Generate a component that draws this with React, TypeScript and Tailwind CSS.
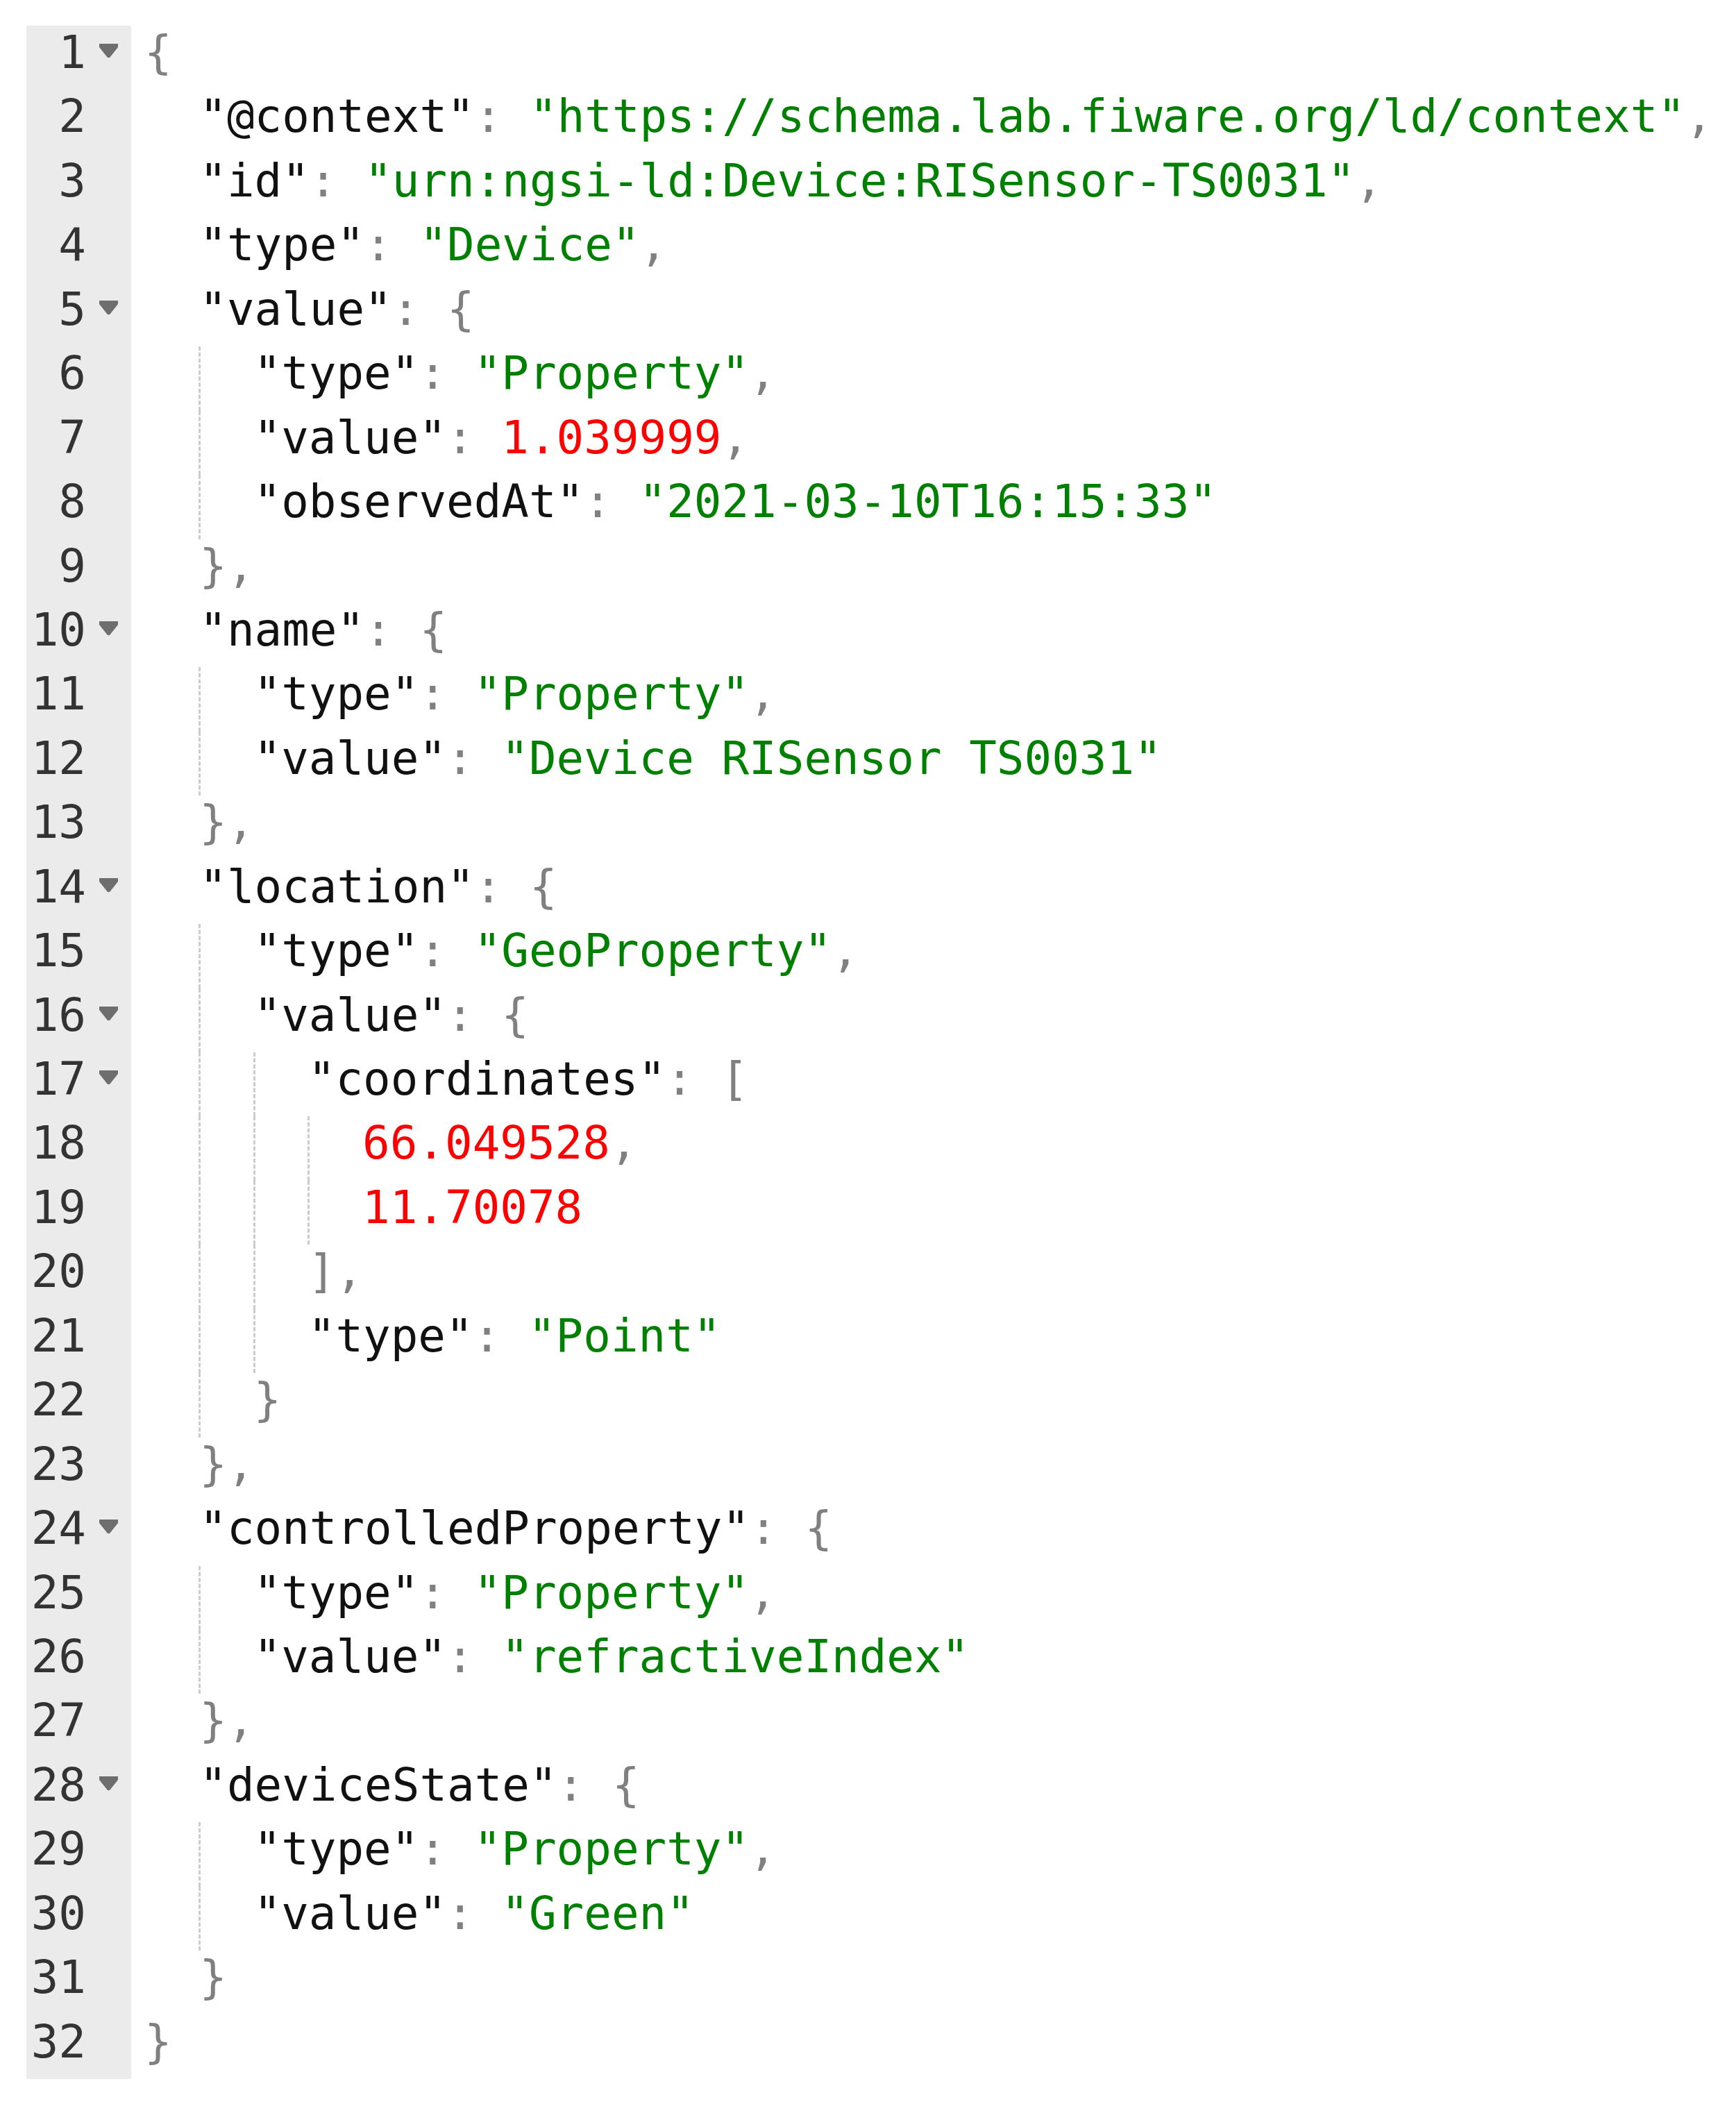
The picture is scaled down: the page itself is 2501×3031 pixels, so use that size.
import React from "react";

type Tok = [string, "k" | "s" | "n" | "p"];

interface Line {
  indent: number;
  fold?: boolean;
  toks: Tok[];
}

// json tokens, one entry per editor row
const lines: Line[] = [
  { indent: 0, fold: true, toks: [["{", "p"]] },
  { indent: 2, toks: [['"@context"', "k"], [": ", "p"], ['"https://schema.lab.fiware.org/ld/context"', "s"], [",", "p"]] },
  { indent: 2, toks: [['"id"', "k"], [": ", "p"], ['"urn:ngsi-ld:Device:RISensor-TS0031"', "s"], [",", "p"]] },
  { indent: 2, toks: [['"type"', "k"], [": ", "p"], ['"Device"', "s"], [",", "p"]] },
  { indent: 2, fold: true, toks: [['"value"', "k"], [": {", "p"]] },
  { indent: 4, toks: [['"type"', "k"], [": ", "p"], ['"Property"', "s"], [",", "p"]] },
  { indent: 4, toks: [['"value"', "k"], [": ", "p"], ["1.039999", "n"], [",", "p"]] },
  { indent: 4, toks: [['"observedAt"', "k"], [": ", "p"], ['"2021-03-10T16:15:33"', "s"]] },
  { indent: 2, toks: [["},", "p"]] },
  { indent: 2, fold: true, toks: [['"name"', "k"], [": {", "p"]] },
  { indent: 4, toks: [['"type"', "k"], [": ", "p"], ['"Property"', "s"], [",", "p"]] },
  { indent: 4, toks: [['"value"', "k"], [": ", "p"], ['"Device RISensor TS0031"', "s"]] },
  { indent: 2, toks: [["},", "p"]] },
  { indent: 2, fold: true, toks: [['"location"', "k"], [": {", "p"]] },
  { indent: 4, toks: [['"type"', "k"], [": ", "p"], ['"GeoProperty"', "s"], [",", "p"]] },
  { indent: 4, fold: true, toks: [['"value"', "k"], [": {", "p"]] },
  { indent: 6, fold: true, toks: [['"coordinates"', "k"], [": [", "p"]] },
  { indent: 8, toks: [["66.049528", "n"], [",", "p"]] },
  { indent: 8, toks: [["11.70078", "n"]] },
  { indent: 6, toks: [["],", "p"]] },
  { indent: 6, toks: [['"type"', "k"], [": ", "p"], ['"Point"', "s"]] },
  { indent: 4, toks: [["}", "p"]] },
  { indent: 2, toks: [["},", "p"]] },
  { indent: 2, fold: true, toks: [['"controlledProperty"', "k"], [": {", "p"]] },
  { indent: 4, toks: [['"type"', "k"], [": ", "p"], ['"Property"', "s"], [",", "p"]] },
  { indent: 4, toks: [['"value"', "k"], [": ", "p"], ['"refractiveIndex"', "s"]] },
  { indent: 2, toks: [["},", "p"]] },
  { indent: 2, fold: true, toks: [['"deviceState"', "k"], [": {", "p"]] },
  { indent: 4, toks: [['"type"', "k"], [": ", "p"], ['"Property"', "s"], [",", "p"]] },
  { indent: 4, toks: [['"value"', "k"], [": ", "p"], ['"Green"', "s"]] },
  { indent: 2, toks: [["}", "p"]] },
  { indent: 0, toks: [["}", "p"]] },
];

const tokColor = {
  k: "text-[#111111]",
  s: "text-[#008000]",
  n: "text-[#ff0000]",
  p: "text-[#808080]",
};

function FoldArrow() {
  return (
    <svg width="27" height="20" viewBox="0 0 27 20">
      <polygon points="0,0 27,0 27,5 15,20 12,20 0,5" fill="#6e6e6e" />
    </svg>
  );
}

function Row({ line, num }: { line: Line; num: number }) {
  const units = line.indent / 2;
  return (
    <div className="flex h-[92.44px]">
      {/* gutter */}
      <div className="flex w-[151px] shrink-0 bg-[#ebebeb]">
        <div className="w-[86px] text-right leading-[78px] text-[#333333]">{num}</div>
        <div className="ml-[19px] w-[27px] pt-[26px]">{line.fold && <FoldArrow />}</div>
      </div>
      {/* code */}
      <div className="flex pl-[19px] whitespace-pre leading-[78px]">
        {Array.from({ length: units }).map((_, i) => (
          <span
            key={i}
            className={
              i === 0
                ? "inline-block h-[92.44px] w-[79.28px]"
                : "inline-block h-[92.44px] w-[79.28px] border-l-[3px] border-dashed border-[#cccccc] -ml-[1px]"
            }
          />
        ))}
        <span>
          {line.toks.map((t, i) => (
            <span key={i} className={tokColor[t[1]]}>
              {t[0]}
            </span>
          ))}
        </span>
      </div>
    </div>
  );
}

export default function App() {
  return (
    <div className="min-h-[3031px] w-[2501px] bg-white pl-[38px] pt-[37px] font-['DejaVu_Sans_Mono',monospace] text-[65.85px]">
      {lines.map((line, i) => (
        <Row key={i} line={line} num={i + 1} />
      ))}
    </div>
  );
}
